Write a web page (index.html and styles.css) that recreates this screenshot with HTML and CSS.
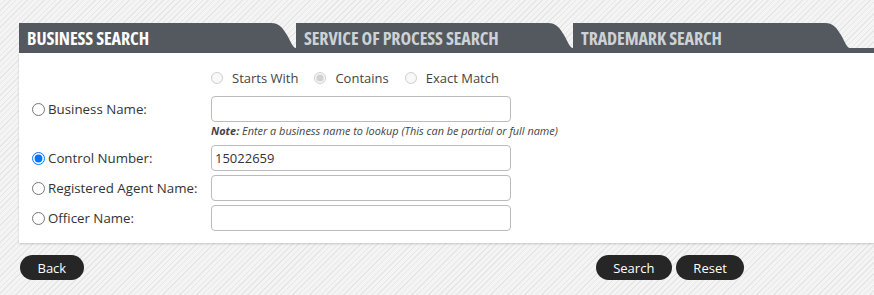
FILE: index.html
```html
<!DOCTYPE html>
<html lang="en">
<head>
    <meta charset="UTF-8">
    <meta name="viewport" content="width=device-width, initial-scale=1.0">
    <title>Business Search</title>
    <link rel="stylesheet" href="styles.css">
</head>
<body>
    <div class="wrap">
        <div class="tabs">
            <div class="tab active">BUSINESS SEARCH</div>
            <div class="tab">SERVICE OF PROCESS SEARCH</div>
            <div class="tab">TRADEMARK SEARCH</div>
        </div>
        <div class="tabbar"></div>

        <form class="panel" id="searchForm">
            <div class="match">
                <input type="radio" name="matchType" id="starts" disabled>
                <label for="starts">Starts With</label>
                <input type="radio" name="matchType" id="contains" checked disabled>
                <label for="contains">Contains</label>
                <input type="radio" name="matchType" id="exact" disabled>
                <label for="exact">Exact Match</label>
            </div>

            <div class="row first">
                <label class="lbl"><input type="radio" name="searchBy" value="name">Business Name:</label>
                <input type="text" class="field">
            </div>
            <div class="note"><b>Note:</b> Enter a business name to lookup (This can be partial or full name)</div>

            <div class="row">
                <label class="lbl"><input type="radio" name="searchBy" value="control" checked>Control Number:</label>
                <input type="text" class="field" value="15022659">
            </div>
            <div class="row">
                <label class="lbl"><input type="radio" name="searchBy" value="agent">Registered Agent Name:</label>
                <input type="text" class="field">
            </div>
            <div class="row">
                <label class="lbl"><input type="radio" name="searchBy" value="officer">Officer Name:</label>
                <input type="text" class="field">
            </div>
        </form>

        <div class="actions">
            <button type="button" class="btn">Back</button>
            <div class="right">
                <button type="button" class="btn">Search</button>
                <button type="button" class="btn">Reset</button>
            </div>
        </div>
    </div>
</body>
</html>
```

FILE: styles.css
```css
body {
    margin: 0;
    font-family: "Open Sans", Arial, sans-serif;
    font-size: 13px;
    color: #333;
    overflow: hidden;
    background-color: #f3f3f3;
    background-image: repeating-linear-gradient(135deg, #f4f4f4 0 3px, #e6e6e6 3px 4px);
    height: 295px;
}
.wrap {
    padding: 23px 0 0 19px;
    width: 870px;
}
.tabs {
    display: flex;
    height: 25px;
}
.tab {
    width: 269px;
    padding-left: 8px;
    height: 25px;
    background-color: #53595f;
    color: #cdd2d7;
    font-family: "Open Sans", sans-serif;
    font-stretch: 78%;
    font-weight: 700;
    font-size: 18px;
    line-height: 30px;
    letter-spacing: -0.1px;
    white-space: nowrap;
    clip-path: path('M0 0 H252 C261 0 264 6 268 12 C272 19 274 25 277 25 H0 Z');
}
.tab.active {
    color: #fff;
}
.tabbar {
    height: 5px;
    background-color: #53595f;
}
.panel {
    background-color: #fff;
    padding: 15px 0 12px 13px;
    box-shadow: 0 1px 2px rgba(0, 0, 0, 0.18);
}
.match {
    display: flex;
    align-items: center;
    height: 20px;
    margin-left: 179px;
    color: #444;
}
.match input {
    margin: 0 9px 0 0;
    width: 12px;
    height: 12px;
}
.match label {
    margin-right: 16px;
}
.row {
    display: flex;
    align-items: center;
    margin-top: 4px;
}
.row.first {
    margin-top: 8px;
}
.lbl {
    width: 179px;
    display: flex;
    align-items: center;
    font-size: 13.3px;
}
.lbl input {
    margin: 0 3px 0 0;
    width: 13px;
    height: 13px;
}
.field {
    box-sizing: border-box;
    width: 300px;
    height: 26px;
    border: 1px solid #bbb;
    border-radius: 4px;
    padding: 0 3px;
    font-family: "Open Sans", Arial, sans-serif;
    font-size: 13px;
    color: #333;
}
.note {
    margin: 1px 0 6px 179px;
    font-size: 10.9px;
    line-height: 16px;
    font-style: italic;
    color: #444;
}
.actions {
    display: flex;
    padding: 12px 0 0 1px;
}
.right {
    display: flex;
    gap: 4px;
    margin-left: 512px;
}
.btn {
    height: 25px;
    border: none;
    border-radius: 13px;
    background-color: #262626;
    color: #fff;
    font-family: "Open Sans", Arial, sans-serif;
    font-size: 13px;
    padding: 0 17.5px;
    cursor: pointer;
}
```
